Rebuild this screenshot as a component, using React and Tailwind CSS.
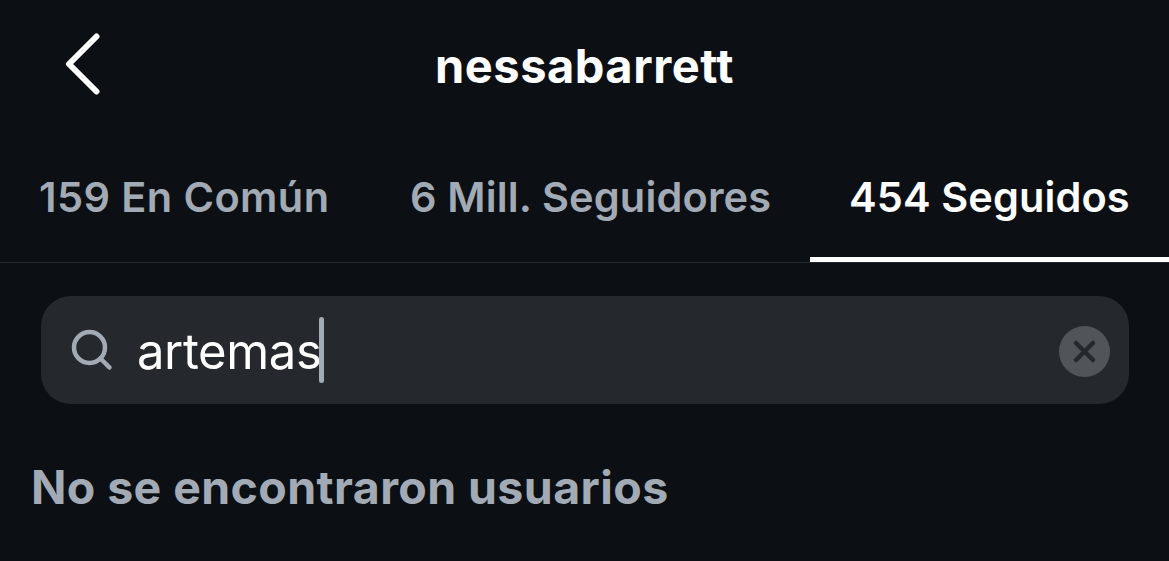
import React, { useState } from "react";

const tabs = [
  { id: "comun", label: "159 En Común", box: "w-[370px] pl-[39px] tracking-[0.4px]" },
  { id: "seguidores", label: "6 Mill. Seguidores", box: "w-[440px] pl-10 tracking-[0.15px]" },
  { id: "seguidos", label: "454 Seguidos", box: "w-[359px] pl-[39px] tracking-[0.1px]" },
];

const Header = () => (
  <header className="grid h-[134px] grid-cols-[1fr_auto_1fr] items-center">
    <button className="ml-[64px] -mt-[6px] w-9" aria-label="Atrás">
      <svg width="36" height="62" viewBox="0 0 36 62" fill="none">
        <path d="M32.500 3.500 5 31 32.500 58.500" stroke="#fff" strokeWidth="6" strokeLinecap="round" strokeLinejoin="round" />
      </svg>
    </button>
    <h1 className="-mt-[3px] text-[47px] font-bold leading-none tracking-[0.5px]">nessabarrett</h1>
  </header>
);

const Tabs = ({ active, onChange }) => (
  <nav className="flex h-[129px] border-b border-[#24282c]">
    {tabs.map((tab) => (
      <button
        key={tab.id}
        onClick={() => onChange(tab.id)}
        className={`whitespace-nowrap border-b-[5px] pt-[3px] text-left text-[41.5px] font-semibold ${tab.box} ${
          active === tab.id ? "border-white text-white" : "border-transparent text-[#a2abb5]"
        }`}
      >
        {tab.label}
      </button>
    ))}
  </nav>
);

const App = () => {
  const [active, setActive] = useState("seguidos");
  const [search, setSearch] = useState("artemas");

  return (
    <div className="h-[561px] w-[1169px] overflow-hidden bg-[#0c1014] font-['Inter',sans-serif] text-white">
      <Header />
      <Tabs active={active} onChange={setActive} />

      {/* Search */}
      <div className="ml-[41px] mr-10 mt-[33px] flex h-[108px] items-center rounded-[30px] bg-[#25282d] pl-[30px] pr-[19px]">
        <svg width="42" height="42" viewBox="0 0 42 42" fill="none" stroke="#a2abb5" strokeWidth="4.500" strokeLinecap="round">
          <circle cx="18.500" cy="18.500" r="15.500" />
          <path d="m29.500 29.500 9 9" />
        </svg>
        <span className="ml-6 pt-[3px] text-[49px] leading-none tracking-[-0.4px]">{search}</span>
        {search && <span className="-ml-[2px] h-[66px] w-[5px] rounded-full bg-[#a2abb5]" />}
        <button className="ml-auto pt-[3px]" onClick={() => setSearch("")} aria-label="Borrar">
          <svg width="51" height="51" viewBox="0 0 51 51" fill="none">
            <circle cx="25.500" cy="25.500" r="25.500" fill="#515458" />
            <path d="m17 17 17 17m0-17-17 17" stroke="#25282d" strokeWidth="4.500" strokeLinecap="round" />
          </svg>
        </button>
      </div>

      <p className="ml-[31px] mt-[59px] text-[46.5px] font-bold leading-[48px] tracking-[0.4px] text-[#a2abb5]">
        No se encontraron usuarios
      </p>
    </div>
  );
};

export default App;
